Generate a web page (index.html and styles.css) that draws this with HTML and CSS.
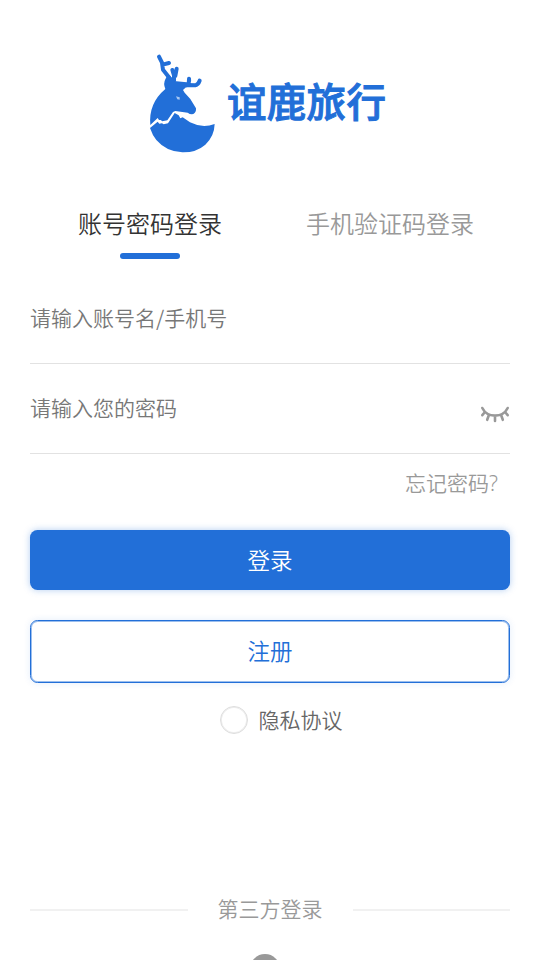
FILE: index.html
```html
<!DOCTYPE html>
<html lang="zh-CN">
<head>
<meta charset="utf-8">
<title>登录</title>
<link rel="stylesheet" href="styles.css">
</head>
<body>
<main class="page">
  <header class="brand">
    <svg class="deer" viewBox="0 0 270 345" aria-hidden="true">
      <g fill="none" stroke="#226fd8" stroke-linecap="round" stroke-linejoin="round">
        <path stroke-width="12" d="M57 35L66 53L69 74L88 98M68 59L87 54M97 75L102 91L102 107M110 71L106 93M137 120L166 121Q175 119 179 107M147 101Q149 113 140 121"/>
      </g>
      <path fill="#226fd8" d="M84 88L98 100L102 108L140 112L142 123L129 135L134 143L151 162L168 190Q169 203 160 207Q151 209 143 203L106 198L99 201L82 226L67 229L62 225L57 225L53 219L31 240Q25 175 76 132Q69 116 76 103Z"/>
      <path fill="#226fd8" d="M30 249L53 230L58 236L66 235L71 238L84 235L104 204L116 211L121 220L128 217L150 232Q187 251 224 237Q223 274 196 299Q168 323 127 322Q79 320 49 285Q37 270 30 249Z"/>
      <path fill="#a8c7f2" d="M108 154L119 157L119 164L112 163Z"/>
    </svg>
    <span class="brand-name">谊鹿旅行</span>
  </header>
  <nav class="tabs">
    <a class="tab active">账号密码登录</a>
    <a class="tab">手机验证码登录</a>
  </nav>
  <form class="form">
    <div class="field"><input type="text" placeholder="请输入账号名/手机号"></div>
    <div class="field">
      <input type="password" placeholder="请输入您的密码">
      <svg class="eye" viewBox="0 0 30 18" aria-hidden="true">
        <path d="M2.3 2Q6 9.6 15 9.6T27.7 2M5 6L2.3 9.2M9 8.8L7.2 13.8M15 9.6V15M21 8.8L22.8 13.8M25 6L27.7 9.2"/>
      </svg>
    </div>
    <a class="forgot">忘记密码<span class="mark">?</span></a>
    <button class="btn primary" type="button">登录</button>
    <button class="btn outline" type="button">注册</button>
    <label class="agree"><span class="radio"></span><span class="agree-text">隐私协议</span></label>
  </form>
  <footer class="third">
    <div class="divider"><span>第三方登录</span></div>
    <div class="provider"></div>
  </footer>
</main>
</body>
</html>
```
FILE: styles.css
```css
* { box-sizing: border-box; }
body {
  margin: 0;
  background: #fff;
  font-family: "Noto Sans CJK SC", sans-serif;
  font-weight: 350;
}
.page {
  height: 960px;
  padding: 45px 30px 0;
  overflow: hidden;
  display: flex;
  flex-direction: column;
}
.brand { display: flex; height: 115px; padding-left: 110px; }
.deer { width: 90px; height: 115px; flex: none; }
.brand-name {
  margin: 27px 0 0 -3px;
  color: #226fd8;
  font-size: 39.5px;
  line-height: 56px;
  font-weight: 500;
  letter-spacing: .3px;
  white-space: nowrap;
  -webkit-text-stroke: 1px #226fd8;
}
.tabs { display: flex; height: 114px; padding-top: 45px; }
.tab {
  flex: 1;
  display: flex;
  flex-direction: column;
  align-items: center;
  color: #999;
  font-size: 24px;
  line-height: 36px;
}
.active { color: #333; }
.active::after {
  content: "";
  width: 60px;
  height: 6px;
  margin-top: 12px;
  border-radius: 3px;
  background: #226fd8;
}
.form { display: flex; flex-direction: column; margin-top: 15px; }
.field {
  display: flex;
  height: 90px;
  border-bottom: 1px solid #e2e2e2;
}
.field input {
  flex: 1;
  min-width: 0;
  height: 36px;
  margin-top: 25px;
  padding: 0;
  border: 0;
  outline: 0;
  font: inherit;
  font-size: 21px;
}
.field input::placeholder { color: #777; opacity: 1; }
.eye { width: 30px; height: 18px; margin-top: 42px; }
.eye path { fill: none; stroke: #999; stroke-width: 2.6; stroke-linecap: round; }
.forgot {
  align-self: flex-end;
  margin: 12px 10px 0 0;
  height: 64px;
  color: #999;
  font-size: 21px;
  line-height: 32px;
}
.mark { display: inline-block; width: 11px; font-family: "Noto Sans", sans-serif; line-height: 1; }
.btn {
  padding: 0 0 2px;
  border: 0;
  border-radius: 7.5px;
  font: inherit;
  font-size: 22.5px;
  box-shadow: 0 0 7px rgba(34, 111, 216, .35);
}
.primary { height: 60px; color: #fff; background: #226fd8; }
.outline {
  height: 63px;
  margin-top: 30px;
  padding-bottom: 3px;
  color: #226fd8;
  background: #fff;
  border: 1px solid #226fd8;
  box-shadow: inset 0 0 0 1px rgba(34, 111, 216, .45), 0 0 7px rgba(34, 111, 216, .12);
}
.agree {
  display: flex;
  align-items: center;
  height: 32px;
  margin: 21px 0 0 190px;
  color: #666;
  font-size: 21px;
  line-height: 32px;
}
.agree-text { margin-top: -2px; }
.radio {
  width: 28px;
  height: 28px;
  margin-right: 10.5px;
  border: 1px solid #ddd;
  border-radius: 50%;
  box-shadow: inset 0 0 0 1px #eee;
}
.third { margin-top: 156px; }
.divider {
  display: flex;
  align-items: center;
  gap: 30px;
  color: #999;
  font-size: 21px;
  line-height: 32px;
}
.divider::before, .divider::after {
  content: "";
  flex: 1;
  height: 2px;
  margin-top: 4px;
  background: #f1f1f1;
}
.provider {
  width: 30px;
  height: 30px;
  margin: 30px 0 0 220px;
  border-radius: 50%;
  background: #999;
}
```
